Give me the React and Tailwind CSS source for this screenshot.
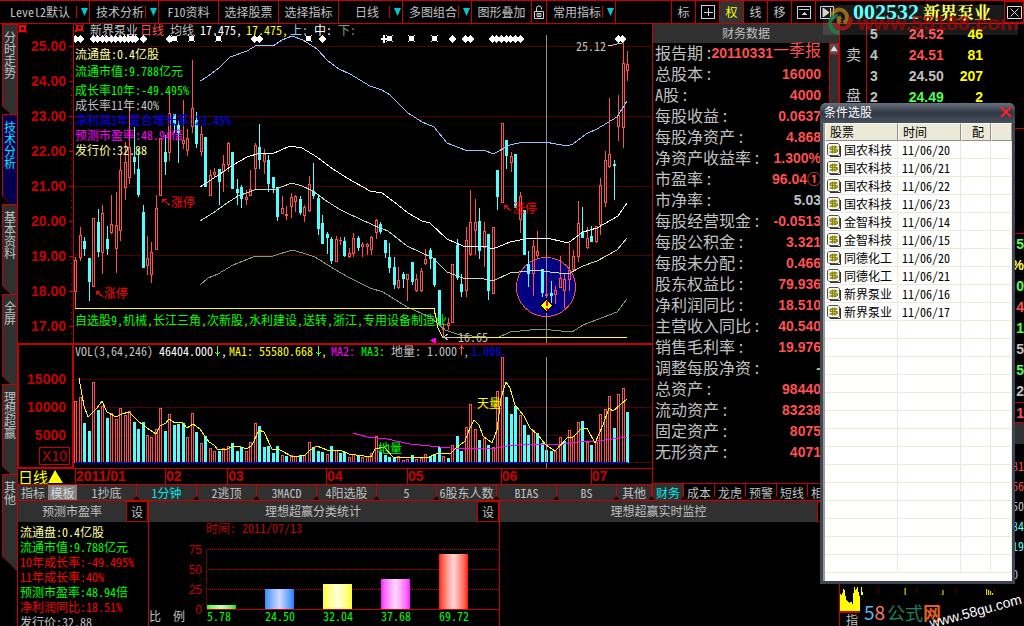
import React from "react";

const RED = "#ff5050";
const CYAN = "#50ffff";

/* high, body top, body bottom, low, r = rising / c = falling */
const CANDLES = `257 260 292 308 r|227 235 258 261 r|237 241 249 256 c|258 258 282 301 c|218 218 287 287 r|209 222 252 257 c|205 213 253 274 r|226 239 249 255 c|195 224 233 234 r|192 225 249 273 r|155 170 231 241 r|142 162 188 200 r|107 147 178 184 r|127 157 162 174 c|148 169 195 197 c|205 212 268 268 c|236 258 266 275 r|242 252 275 283 r|195 208 250 250 r|138 138 196 196 r|135 152 162 175 c|90 113 153 161 r|114 114 124 133 c|121 125 133 163 c|100 140 144 149 r|129 138 151 156 r|60 108 127 133 r|112 120 144 148 c|126 134 152 156 r|137 137 187 187 c|170 175 196 196 r|168 172 175 178 r|169 169 182 205 c|155 164 172 192 r|142 143 165 172 r|152 152 189 189 c|179 189 193 205 c|185 187 199 208 c|190 197 200 205 r|170 189 196 196 r|143 145 169 189 r|124 147 160 169 c|149 154 162 174 r|155 160 184 192 c|177 177 188 193 c|187 187 217 221 c|196 208 214 214 r|206 214 216 220 r|193 197 207 218 r|195 196 202 212 r|196 199 213 215 c|205 207 216 222 r|176 184 211 212 r|163 191 196 199 c|195 198 229 235 c|215 223 244 244 c|232 234 238 254 c|237 239 261 264 c|236 239 262 262 r|237 240 241 245 r|237 241 256 257 c|248 253 257 258 r|233 238 254 257 r|236 238 248 251 c|242 244 247 257 r|243 244 247 255 r|236 237 250 255 r|219 220 233 239 r|222 224 232 234 c|240 240 253 258 c|243 257 268 273 c|257 267 285 289 c|267 280 288 289 r|272 274 279 288 c|274 274 280 301 r|262 262 282 285 c|274 279 291 292 r|268 271 291 292 r|249 259 264 265 r|248 250 259 269 c|258 258 285 287 c|290 290 325 325 c|323 328 330 337 r|318 323 326 330 r|264 264 323 323 r|239 245 278 280 c|274 284 292 297 c|227 240 291 297 r|190 222 255 256 r|199 222 231 255 r|208 221 251 259 c|222 231 248 267 r|234 234 291 300 c|227 227 294 294 r|170 170 197 210 c|123 123 203 203 r|140 140 156 169 c|152 156 163 172 r|154 154 208 208 c|192 196 220 233 r|210 210 255 255 c|251 264 274 287 c|240 246 274 296 r|231 251 256 259 r|269 269 293 297 c|276 294 296 297 r|281 293 296 308 c|286 290 295 304 r|256 278 288 288 r|273 279 291 308 r|243 270 280 291 r|250 256 270 272 r|201 223 257 262 r|207 232 238 238 c|227 238 248 249 r|226 236 242 242 c|226 226 242 243 r|178 185 225 235 r|151 160 203 207 r|98 154 167 168 r|160 164 166 200 c|95 115 127 141 r|41 63 128 148 r|51 64 71 81 r`
  .split("|")
  .map((row) => {
    const [high, top, bottom, low, kind] = row.split(" ");
    return { high: +high, top: +top, bottom: +bottom, low: +low, up: kind === "r" };
  });

const VOLUMES =
  "401r 397r 423c 431c 382r 410c 406r 418c 413r 419r 408r 415r 411r 422c 429c 422c 435r 437r 429r 408r 431c 414r 425c 424c 423c 437r 413r 432c 443r 436c 448r 451r 451c 448r 446r 443c 451c 447c 451r 442r 423r 426c 447c 446c 453c 446c 455r 456c 455r 456r 455c 455r 442r 447c 451c 452c 454r 446c 450r 453c 452c 457r 454r 456c 457r 456r 453r 436r 452c 455c 457c 457c 456r 460r 459r 455c 459r 458r 454r 456c 454c 447c 456r 458c 445r 436c 451c 427r 404r 429r 440c 438r 445c 447r 391r 357r 397c 414c 406c 415r 425c 435c 430r 433c 443c 450c 451c 451r 437r 441c 430r 436r 422r 421c 442r 445c 442r 414r 409r 396r 428c 394r 388r 412c"
    .split(" ")
    .map((v) => ({ top: parseInt(v, 10), up: v.endsWith("r") }));

const barX = (i) => Math.round(75.2 + i * 4.488);

const BAND_TOP = "200,81 207,77 219,68 230,57 247,51 257,45 273,46 282,40 292,36 303,40 317,49 328,61 339,69 350,74 370,86 382,90 390,95 408,113 422,122 434,127 447,143 465,150 484,150 493,154 510,145 523,142 545,142 567,146 573,144 586,134 597,129 617,117 627,101";
const BAND_UPPER = "200,187 220,174 233,165 247,157 260,153 272,154 290,146 302,148 317,157 333,169 347,178 370,191 382,193 393,201 408,213 422,221 430,223 447,239 463,246 485,246 493,249 510,242 525,239 547,238 568,243 583,232 597,228 618,216 627,203";
const BAND_MID = "200,221 213,213 227,203 238,196 257,189 273,190 292,183 302,186 313,191 325,200 339,209 347,213 373,225 388,231 407,246 433,258 447,272 463,278 480,278 493,281 510,273 538,270 550,272 568,274 583,266 597,261 617,250 627,238";
const BAND_LOW = "200,285 208,278 218,274 233,265 253,257 273,256 292,250 303,253 315,257 339,272 350,278 370,288 383,292 407,307 430,317 445,330 460,335 497,338 510,332 540,329 572,332 583,325 617,312 627,299";
const VOL_MA = "79,378 84,406 88,417 97,408 102,401 107,412 116,417 122,414 129,412 138,421 147,428 156,434 160,426 166,423 169,419 175,423 182,422 187,428 193,424 200,429 209,442 214,445 218,450 227,449 233,446 241,447 247,449 252,445 259,430 264,432 272,449 280,450 293,457 305,455 310,450 317,446 327,450 340,450 349,454 371,457 375,449 384,447 393,457 408,458 429,457 438,453 450,454 456,448 465,441 470,428 474,420 479,425 483,436 492,443 497,430 501,398 506,382 510,388 515,405 524,416 530,428 537,434 546,445 555,451 568,437 573,437 582,428 587,428 595,443 603,425 609,408 613,411 627,399";
const VOL_SLOW = "353,433 367,437 387,439 410,444 450,448 492,449 507,446 530,444 557,445 577,442 597,441 627,437";

const DIAMONDS = [75, 80, 93, 97, 102, 106, 111, 115, 120, 124, 128, 132, 135, 143, 169, 254, 259, 322, 452, 465, 470, 492, 496, 501, 506, 510, 515, 520, 618, 622];
const STARS = [130, 174, 191, 218, 308, 389, 411, 434];

const Line = ({ pts, color }) => (
  <polyline points={pts} fill="none" stroke={color} strokeWidth="1" shapeRendering="crispEdges" />
);

function Drop() {
  return (
    <span className="flex h-3 w-3 items-center justify-center border-l border-[#c80000]">
      <svg width="7" height="8" viewBox="0 0 7 8" className="ml-1 shrink-0"><path d="M0 0h7L3.5 8z" fill="#00c8d0" /></svg>
    </span>
  );
}

function Tool({ children, drop, className = "" }) {
  return (
    <button className={"flex h-full shrink-0 items-center border-r border-[#c80000] whitespace-nowrap " + (drop ? "justify-between pl-1.5 pr-px " : "justify-center ") + className}>
      {children}
      {drop && <Drop />}
    </button>
  );
}

function Toolbar() {
  return (
    <header className="flex h-6 items-center border-y border-[#c80000]">
      <Tool drop className="w-[90px]"><span className="pl-1">Level2默认</span></Tool>
      <Tool drop className="w-[69px]">技术分析</Tool>
      <Tool className="w-[60px]">F10资料</Tool>
      <Tool className="w-[60px]">选择股票</Tool>
      <Tool className="w-[60px]">选择指标</Tool>
      <Tool drop className="w-[64px]"><span className="pl-2.5">日线</span></Tool>
      <Tool drop className="w-[69px]">多图组合</Tool>
      <Tool className="w-[60px]">图形叠加</Tool>
      <Tool className="w-[15px]">
        <svg width="12" height="14" viewBox="0 0 12 14" fill="none" stroke="#d0d0d0" aria-label="锁定">
          <path d="M1.500 6.500h9v7h-9zM3.500 6V3q0-2 2.500-2t2.500 2v1.500M4 8.500h4v3h-4zM6 9v3" />
        </svg>
      </Tool>
      <Tool drop className="w-[69px]">常用指标</Tool>
      <span className="h-full flex-1 border-r border-[#c80000]" />
      <Tool className="w-6">标</Tool>
      <Tool className="w-6">
        <svg width="14" height="14" viewBox="0 0 14 14" fill="none" stroke="#d0d0d0" shapeRendering="crispEdges" aria-label="加"><path d="M.5.5h13v13H.5zM7.500 3v8M3 7.500h9" /></svg>
      </Tool>
      <Tool className="w-6 bg-[#333] text-[#ffff00]">权</Tool>
      <Tool className="w-6">线</Tool>
      <Tool className="w-6">移</Tool>
      <Tool className="w-6">
        <svg width="14" height="13" viewBox="0 0 14 13" fill="none" stroke="#d0d0d0" shapeRendering="crispEdges" aria-label="收起"><path d="M.5.5h13v12H.5zM2 3.500h10M5 8.500h5M6 7.500h3M7 6.500h1" /></svg>
      </Tool>
      <button className="flex h-full w-[22px] shrink-0 items-center justify-center">
        <svg width="14" height="13" viewBox="0 0 14 13" fill="none" stroke="#d0d0d0" aria-label="右移"><path d="M.5.5h13v12H.5zM10.500 2v9" /><path d="M3 2l6 4.500L3 11z" fill="#d0d0d0" /></svg>
      </button>
      <div className="relative flex h-full w-[186px] shrink-0 items-center pl-[15px]">
        <div className="pointer-events-none absolute top-1 -left-[15px] z-10 flex h-[30px] w-[195px] bg-white/10">
          <svg width="28" height="30" viewBox="0 0 28 30" className="ml-1 shrink-0 opacity-80" fill="none" strokeWidth="4">
            <path d="M4 10q7-9 14-3q5 6-1 11" stroke="#b08020" />
            <path d="M23 12q2 8-5 11q-7 2-9-5" stroke="#b01818" />
            <path d="M12 28q-9-2-9-10q1-7 8-7" stroke="#208050" />
            <path d="M14 12q-4 2-1 6" stroke="#b08020" />
          </svg>
          <span className="pt-[7px] pl-0.5 font-['Liberation_Sans',sans-serif] text-[21px] leading-[22px] font-bold text-[#b00000]/70">www.55188.com</span>
        </div>
        <span className="font-['Liberation_Serif',serif] text-[22px] leading-5 font-bold text-[#50ffff]">002532</span>
        <span className="ml-1 font-['Noto_Serif_CJK_SC','Noto_Sans_CJK_SC',serif] text-[17px] leading-5 font-bold text-[#ffff50]">新界泵业</span>
        <button className="relative z-20 ml-auto flex h-full w-5 items-center justify-center border border-[#c80000] bg-black">
          <svg width="15" height="13" viewBox="0 0 15 13" className="shrink-0" fill="none" stroke="#e0e0e0" aria-label="关闭"><path d="M.5.5h14v12H.5zM3.500 2.500l8 8M11.500 2.500l-8 8" /></svg>
        </button>
      </div>
    </header>
  );
}

const SIDE = ["分时走势", "技术分析", "基本资料", "全屏", "理想超赢", "其他"];

function SideTabs() {
  return (
    <nav className="flex w-[18px] shrink-0 flex-col border-r border-[#c80000] pl-0.5">
      {SIDE.map((t, i) => {
        const last = i === 5;
        const clip = last
          ? "[clip-path:polygon(0_0,100%_0,100%_100%,0_calc(100%-15px))]"
          : "[clip-path:polygon(0_0,100%_0,100%_100%,55%_100%,0_calc(100%-8px))]";
        return (
          <button key={t} className={"w-full shrink-0 bg-[#c80000] pt-px pl-px " + (last ? "h-[97px] " : "h-[90px] ") + clip}>
            <span className={"flex h-full w-full flex-col items-center pt-1.5 leading-3 " + clip + (i === 1 ? " bg-[#000050] text-[#00e8ff]" : " bg-[#303030] text-[#c0c0c0]")}>
              {[...t].map((c) => <span key={c}>{c}</span>)}
            </span>
          </button>
        );
      })}
    </nav>
  );
}

function PriceChart() {
  return (
    <section className="flex h-[321px] border-b-2 border-[#c80000]">
      <div className="relative w-14 shrink-0 pt-1">
        {["25.00", "24.00", "23.00", "22.00", "21.00", "20.00", "19.00", "18.00", "17.00"].map((p) => (
          <div key={p} className="flex h-[35px] items-center justify-end pr-2 font-['Liberation_Sans',sans-serif] text-sm leading-4 font-bold text-[#c80000]">{p}</div>
        ))}
        <svg className="absolute top-0 right-0" width="5" height="319" viewBox="0 24 5 319" shapeRendering="crispEdges">
          {Array.from({ length: 42 }, (_, i) => <rect key={i} x={i % 5 ? 2 : 0} y={46 + i * 7} width={i % 5 ? 1 : 4} height="1" fill="#c80000" />)}
          <rect x="4" y="24" width="1" height="319" fill="#c80000" />
        </svg>
        <svg className="absolute top-0 left-0" width="9" height="9" viewBox="0 0 9 9"><path d="M0 0l2 1h5l2-1-1 3v3l1 3-3-1H3L0 9l1-3V3z" fill="#ff0000" /><rect x="3" y="3" width="3" height="3" fill="#000" /></svg>
      </div>
      <div className="relative min-w-0 flex-1">
        <svg className="block h-full w-full" viewBox="74 24 578 319" preserveAspectRatio="none" shapeRendering="crispEdges">
          {[46, 116, 186, 255, 325].map((y) => <rect key={y} x="74" y={y} width="578" height="1" fill="#500000" />)}
          <circle cx="546" cy="287" r="29.500" fill="#000080" stroke={RED} />
          <rect x="546" y="35" width="1" height="309" fill="#909090" />
          {CANDLES.map((c, i) => {
            const x = barX(i);
            const h = Math.max(1, c.bottom - c.top);
            const col = c.up ? RED : CYAN;
            return (
              <g key={i} fill={col}>
                <rect x={x} y={c.high} width="1" height={Math.max(0, c.top - c.high)} />
                <rect x={x} y={c.bottom} width="1" height={Math.max(0, c.low - c.bottom)} />
                {c.up && h > 1 ? <rect x={x - 0.5} y={c.top + 0.5} width="2" height={h - 1 || 1} fill="none" stroke={col} /> : <rect x={x - 1} y={c.top} width="3" height={h} />}
              </g>
            );
          })}
          <Line pts={BAND_TOP} color="#a0c0ff" />
          <Line pts={BAND_UPPER} color="#ffffff" />
          <Line pts={BAND_MID} color="#c0dcc0" />
          <Line pts={BAND_LOW} color="#809880" />
          <Line pts="75,308.500 434,308.500 438,328 443,337.500 627,337.500" color="#ffff00" />
          {DIAMONDS.map((x) => <path key={x} d={`M${x - 3} 39l3-4 4 4-4 4z`} fill="#fff" />)}
          {STARS.map((x) => <path key={x} d={`M${x - 3} 35l2 1h3l2-1-1 2v3l1 2-2-1h-3l-2 1 1-2v-3z`} fill="#fff" />)}
          <path d="M384 35v8M381 39h7" stroke="#fff" strokeWidth="2" />
          <path d="M540 305.500l6.500-6.500 6.500 6.500-6.500 6.500z" fill="#ffff00" stroke="#000" />
          <path d="M546.500 301v5M546.500 308v2" stroke="#ff0000" strokeWidth="2" />
          <path d="M169.500 205l-7-6m0 4v-4h4M103 297l-7-6m0 4v-4h4M511 211l-7-6m0 4v-4h4" fill="none" stroke="#ff0000" />
          <path d="M608 46l14-3M457 337h-13l4-3m-4 3l4 3" fill="none" stroke="#c0c0c0" />
          <path d="M430 340.500l6-3v6z" fill="#ff00ff" />
          <path d="M75 24l2 1h5l2-1-1 2v3l1 3-3-1h-3l-3 1 1-3v-3z" fill="#ff0000" />
          <rect x="78" y="26" width="3" height="3" fill="#000" />
        </svg>
        <div className="absolute top-0 left-4 flex h-3 items-center leading-3 whitespace-nowrap">
          <span className="text-[#c0c0c0]">新界泵业</span>
          <span className="ml-0.5 text-[#ff5050]">日线</span>
          <span className="ml-1.5 text-[#c0c0c0]">均线</span>
          <span className="ml-1.5 text-white">17.475,</span>
          <span className="ml-1 text-[#ffff00]">17.475,</span>
          <span className="ml-0.5 text-[#a0c0ff]">上:</span>
          <span className="ml-1.5 text-white">中:</span>
          <span className="ml-1.5 text-[#809880]">下:</span>
        </div>
        <div className="absolute top-[22px] left-px flex flex-col leading-[15px] whitespace-nowrap">
          <span className="mb-0.5 text-[#ffffa0]">流通盘:0.4亿股</span>
          <span className="mb-1 text-[#00ff00]">流通市值:9.788亿元</span>
          <span className="text-[#00ff00]">成长率10年:-49.495%</span>
          <span className="text-[#c0c0c0]">成长率11年:40%</span>
          <span className="text-[#0000ff]">净利润3年复合增长率:23.45%</span>
          <span className="text-[#ff00ff]">预测市盈率:48.94倍</span>
          <span className="text-[#ffffa0]">发行价:32.88</span>
        </div>
        <span className="absolute top-[170px] left-[97px] leading-4 text-[#ff0000]">涨停</span>
        <span className="absolute top-[261px] left-[30px] leading-4 text-[#ff0000]">涨停</span>
        <span className="absolute top-[176px] left-[439px] leading-4 text-[#ff0000]">涨停</span>
        <span className="absolute top-[14px] left-[502px] leading-4 text-[#c0c0c0]">25.12</span>
        <span className="absolute top-[305px] left-[384px] leading-4 text-[#c0c0c0]">16.65</span>
        <span className="absolute top-[288px] left-px leading-4 whitespace-nowrap text-[#00ff00]">自选股9,机械,长江三角,次新股,水利建设,送转,浙江,专用设备制造业</span>
      </div>
    </section>
  );
}

function VolumeChart() {
  return (
    <section className="flex h-[123px]">
      <div className="relative w-14 shrink-0 border-r-2 border-b border-l border-[#c80000] pt-5">
        {["15000", "10000", "5000"].map((p) => (
          <div key={p} className="flex h-7 items-center justify-end pr-1.5 font-['Liberation_Sans',sans-serif] text-sm leading-4 font-bold text-[#c80000]">{p}</div>
        ))}
        <div className="absolute right-0.5 bottom-0.5 border border-[#c80000] px-0.5 font-['Liberation_Sans',sans-serif] text-sm leading-4 text-[#c80000]">X10</div>
      </div>
      <div className="relative min-w-0 flex-1">
        <svg className="block h-full w-full" viewBox="74 345 578 123" preserveAspectRatio="none" shapeRendering="crispEdges">
          {[379, 407, 435, 462].map((y) => <rect key={y} x="74" y={y} width="578" height="1" fill="#500000" />)}
          {VOLUMES.map((v, i) => v.up
            ? <rect key={i} x={barX(i) - 0.5} y={v.top + 0.5} width="2" height={462 - v.top} fill="none" stroke={RED} />
            : <rect key={i} x={barX(i) - 1} y={v.top} width="3" height={463 - v.top} fill={CYAN} />)}
          <rect x="546" y="357" width="1" height="111" fill="#909090" />
          <rect x="75" y="462" width="553" height="1" fill="#0000ff" />
          <Line pts={VOL_SLOW} color="#ff00ff" />
          <Line pts={VOL_MA} color="#ffff00" />
          <path d="M217.500 346v9m-2-3l2 3 2-3M318.500 346v9m-2-3l2 3 2-3" stroke="#50ff50" fill="none" />
          <path d="M461.500 355v-9m-2 3l2-3 2 3" stroke={RED} fill="none" />
        </svg>
        <div className="absolute top-0 left-px flex h-3 items-center leading-3 whitespace-nowrap">
          <span className="text-[#c0c0c0]">VOL(3,64,246)</span>
          <span className="ml-1.5 text-white">46404.000</span>
          <span className="ml-2 text-white">,</span>
          <span className="ml-0.5 text-[#ffff00]">MA1: 55580.668</span>
          <span className="ml-2 text-[#ffff00]">,</span>
          <span className="ml-1 text-[#ff00ff]">MA2:</span>
          <span className="ml-1.5 text-[#00ff00]">MA3:</span>
          <span className="ml-1.5 text-[#c0c0c0]">地量: 1.000</span>
          <span className="ml-1.5 text-[#c0c0c0]">,</span>
          <span className="ml-0.5 text-[#0000ff]">1.000,</span>
        </div>
        <span className="absolute top-[50px] left-[403px] leading-4 text-[#ffff00]">天量</span>
        <span className="absolute top-[95px] left-[304px] leading-4 text-[#00ff00]">地量</span>
      </div>
    </section>
  );
}

const MONTHS = [["2011/01", 90], ["02", 62], ["03", 99], ["04", 81], ["05", 94], ["06", 90], ["07", 61]];

function DateAxis() {
  return (
    <div className="flex h-4 border-t border-[#c80000]">
      <button className="flex w-[57px] shrink-0 items-center text-[15px] leading-4 text-[#ffff00]">
        日线<svg width="15" height="13" viewBox="0 0 15 13"><path d="M0 13L7 0l8 13z" fill="#ffff00" /></svg>
      </button>
      {MONTHS.map(([m, w]) => (
        <span key={m} className="min-w-0 basis-0 border-l border-[#c80000] font-['Liberation_Sans',sans-serif] text-sm leading-[15px] font-bold text-[#c80000]" style={{ flexGrow: w }}>{m}</span>
      ))}
    </div>
  );
}

const TEMPLATES = ["1抄底", "1分钟", "2逃顶", "3MACD", "4阳选股", "5", "6股东人数", "BIAS", "BS", "其他"];

function TemplateTabs() {
  return (
    <div className="flex h-[17px] border-y border-[#c80000] bg-[#303030] leading-[14px]">
      <button className="w-[30px] shrink-0">指标</button>
      <button className="w-[29px] shrink-0 bg-[#808080] text-[#d8d8d8]">模板</button>
      {TEMPLATES.map((t, i) => (
        <button key={t} className={"relative border-r border-[#c80000] whitespace-nowrap " + (i === 9 ? "w-[35px] shrink-0 " : "min-w-0 flex-1 ") + (i === 1 ? "text-[#00e8e8]" : "")}>
          {t}
          <svg className="absolute right-[-4px] bottom-0 z-10" width="7" height="4" viewBox="0 0 7 4"><path d="M0 4l3.500-4L7 4z" fill="#000" stroke="#c80000" strokeWidth=".5" /></svg>
        </button>
      ))}
    </div>
  );
}

const FINANCE = [
  ["报告期", "20110331一季报"], ["总股本", "16000"], ["A股", "4000"], ["每股收益", "0.0637"], ["每股净资产", "4.868"],
  ["净资产收益率", "1.300%"], ["市盈率", "96.04①"], ["市净率", "5.03"], ["每股经营现金", "-0.0513"], ["每股公积金", "3.321"],
  ["每股未分配", "0.466"], ["股东权益比", "79.936"], ["净利润同比", "18.510"], ["主营收入同比", "40.540"], ["销售毛利率", "19.976"],
  ["调整每股净资", "-"], ["总资产", "98440"], ["流动资产", "83238"], ["固定资产", "8075"], ["无形资产", "4071"],
];

function Finance() {
  return (
    <aside className="flex w-[187px] shrink-0 flex-col border-l border-[#c80000]">
      <h2 className="h-[19px] bg-[#303030] text-center leading-[18px]">财务数据</h2>
      <div className="flex flex-1">
        <table className="h-[420px] w-[168px] table-fixed border-collapse whitespace-nowrap">
          <colgroup><col className="w-[54px]" /><col /></colgroup>
          <tbody>
            {FINANCE.map(([k, v], i) => (
              <tr key={k} className="h-[21px]">
                <th scope="row" className="p-0 pl-0.5 text-left align-top text-base leading-[18px] font-normal text-[#c0c0c0]">{k}<span className="pl-0.5">:</span></th>
                <td className={"p-0 text-right align-top font-['Liberation_Sans','Noto_Sans_CJK_SC',sans-serif] text-sm leading-5 font-bold " + (k === "市净率" || v === "-" ? "text-[#c0c0c0]" : "text-[#ff5050]")}>
                  {i === 0 ? <span className="flex items-center justify-end leading-5">20110331<span className="-mt-1 text-base leading-[18px] font-normal">一季报</span></span> : v}
                </td>
              </tr>
            ))}
          </tbody>
        </table>
        <div className="ml-auto w-2.5 border border-[#c80000] bg-[#303030]">
          <svg width="8" height="11" viewBox="0 0 8 11" className="border-b border-[#c80000] bg-[#505050]"><path d="M0 8l4-6 4 6z" fill="#e0e0e0" /></svg>
        </div>
      </div>
      <div className="flex h-[18px] border-y border-[#c80000] leading-[15px]">
        {["财务", "成本", "龙虎", "预警", "短线", "相关"].map((t, i) => (
          <button key={t} className={"relative flex-1 border-r border-[#c80000] whitespace-nowrap " + (i === 0 ? "bg-[#303030] text-[#00e8e8]" : "")}>
            {t}
            <svg className="absolute right-[-4px] bottom-0 z-10" width="7" height="4" viewBox="0 0 7 4"><path d="M0 4l3.500-4L7 4z" fill="#000" stroke="#c80000" strokeWidth=".5" /></svg>
          </button>
        ))}
      </div>
    </aside>
  );
}

function PanelHead({ title, blank }) {
  return (
    <div className="flex h-[21px] shrink-0 bg-[#303030] leading-[19px]">
      <h2 className="flex-1 text-center">{title}</h2>
      <button aria-label="设置" className="w-[22px] border border-[#c80000] bg-black leading-[17px]">{blank ? "" : "设"}</button>
    </div>
  );
}

const BARS = [
  ["5.78", 4, "from-[#00ff00] via-[#c0ffc0] to-[#00e000]"],
  ["24.50", 20, "from-[#3090ff] via-[#d0d8ff] to-[#1080ff]"],
  ["32.04", 25, "from-[#ffff00] via-[#ffffd8] to-[#ffff00]"],
  ["37.68", 30, "from-[#ff00ff] via-[#ffd8ff] to-[#ff00ff]"],
  ["69.72", 55, "from-[#ff0000] via-[#ffd8d8] to-[#ff0000]"],
];

function BottomPanels() {
  return (
    <div className="flex h-[125px] flex-1">
      <section className="flex w-[131px] shrink-0 flex-col overflow-hidden border-r border-[#c80000]">
        <PanelHead title="预测市盈率" />
        <div className="flex flex-col pt-0.5 pl-0.5 leading-[15px] whitespace-nowrap">
          <span className="text-[#ffffa0]">流通盘:0.4亿股</span>
          <span className="text-[#00ff00]">流通市值:9.788亿元</span>
          <span className="text-[#ff0000]">10年成长率:-49.495%</span>
          <span className="text-[#ff0000]">11年成长率:40%</span>
          <span className="text-[#00ff00]">预测市盈率:48.94倍</span>
          <span className="text-[#ff0000]">净利润同比:18.51%</span>
          <span>发行价:32.88</span>
        </div>
      </section>
      <section className="flex w-[351px] shrink-0 flex-col border-r border-[#c80000]">
        <PanelHead title="理想超赢分类统计" />
        <div className="h-3 pl-[57px] leading-3 text-[#c80000]">时间: 2011/07/13</div>
        <div className="mt-1.5 flex">
          <div className="flex w-[57px] shrink-0 flex-col items-end pr-1 font-['Liberation_Sans',sans-serif] text-xs leading-5 text-[#c80000]">
            <span>75</span><span>50</span><span>25</span><span>0</span>
          </div>
          <div className="relative mt-[9px] flex h-[61px] flex-1 items-end gap-[29px] border-b border-[#c80000] pl-px">
            <svg className="absolute inset-0 h-full w-full" fill="none" stroke="#c80000" strokeDasharray="1 1" shapeRendering="crispEdges">
              <path d="M0.500 0V60M0 .5H800M0 20.500H800M0 40.500H800" />
            </svg>
            {BARS.map(([v, h, g]) => <div key={v} className={"relative w-[29px] bg-linear-to-r " + g} style={{ height: h }} />)}
          </div>
        </div>
        <div className="-mt-3 flex leading-4">
          <span className="w-[58px] shrink-0">比&nbsp; 例</span>
          <div className="flex flex-1 gap-[29px] text-[#00ff00]">
            {BARS.map(([v]) => <span key={v} className="w-[29px] whitespace-nowrap">{v}</span>)}
          </div>
        </div>
      </section>
      <section className="flex min-w-0 flex-1 flex-col">
        <PanelHead title="理想超赢实时监控" blank />
      </section>
    </div>
  );
}

const ASKS = [["5", "24.52", "46", "text-[#ff5050]"], ["4", "24.51", "81", "text-[#ff5050]"], ["3", "24.50", "207", "text-[#c0c0c0]"], ["2", "24.49", "2", "text-[#50ff50]"]];
const QUOTE_BITS = [["5", "text-[#50ff50]"], ["%", "text-[#ffff50]"], ["0", "text-[#50ff50]"], ["4", "text-[#ff5050]"], ["1", "text-[#50ff50]"], ["5", "text-[#c0c0c0]"], ["5", "text-[#50ff50]"], ["2", "text-[#c0c0c0]"]];
const TICKS = [["81", "text-[#ff5050]"], ["66", "text-[#ff5050]"], ["50", "text-[#c0c0c0]"], ["84", "text-[#50ffff]"], ["19", "text-[#50ffff]"]];

function Quotes() {
  return (
    <aside className="flex w-[185px] shrink-0 flex-col border-l border-[#c80000] font-['Liberation_Sans','Noto_Sans_CJK_SC',sans-serif] font-bold">
      <div className="flex h-[105px] border-b border-[#c80000]">
        <div className="flex w-[27px] flex-col gap-5 border-r border-[#c80000] pt-5 pl-1.5 text-[15px] leading-[21px] font-normal text-[#c0c0c0]"><span>卖</span><span>盘</span></div>
        <table className="h-[84px] w-[116px] text-sm leading-[21px]">
          <tbody>
            {ASKS.map(([n, p, q, c]) => (
              <tr key={n}><td className="pl-[3px]">{n}</td><td className={"text-right " + c}>{p}</td><td className="text-right text-[#ffff00]">{q}</td></tr>
            ))}
          </tbody>
        </table>
      </div>
      <div className="mt-[104px] border-t border-b border-[#c80000] text-right text-sm leading-[21px]">
        {QUOTE_BITS.map(([t, c], i) => <div key={i} className={c}>{t}</div>)}
      </div>
      <div className="h-[20px] border-b border-[#c80000] text-right text-sm leading-[20px] text-[#ff5050]">1</div>
      <div className="h-[21px] bg-[#303030]" />
      <div className="pt-3 text-right font-['Noto_Sans_Mono_CJK_SC','Noto_Sans_CJK_SC',sans-serif] text-xs leading-5 font-normal">
        {TICKS.map(([t, c], i) => <div key={i} className={c}>{t}</div>)}
        <div className="pt-2 pr-1.5">0</div>
      </div>
      <div className="relative mt-auto flex h-[42px] flex-col">
        <svg className="h-[24px] w-full" viewBox="839 584 185 24" preserveAspectRatio="none" shapeRendering="crispEdges">
          <path d="M839 608V590l2 2 2-8 2 12 4 5 1-3 2 4 1-20 2 6 2-6 1 11h2V584h1v5h1v19z" fill="#ffff00" />
          <path d="M877.500 584v9M916.500 584v9M955.500 584v9M994.500 584v9" stroke="#a00000" strokeDasharray="1 1" />
          <path d="M904.500 585v7M940 592h1m1.500-5v5M986.500 586v6M988.500 587v5M990.500 588v5M992.500 590v3" stroke="#ffff00" />
        </svg>
        <div className="border-t-2 border-[#c80000] pl-1.5 text-xs leading-4 font-normal">指</div>
        <div className="absolute -right-px bottom-0 flex h-[34px] w-[165px] items-center bg-black">
          <span className="ml-1 flex font-['Noto_Sans_CJK_SC',sans-serif] text-[19px] leading-6 font-normal">
            <span className="text-[#50b8f0]">5</span><span className="text-[#ff8060]">8</span>
            <span className="ml-0.5 text-[18px] text-[#208060]">公式</span><span className="text-[18px] font-bold text-[#e06020]">网</span>
          </span>
          <span className="absolute top-2 right-0.5 origin-center -rotate-[15deg] text-[14px] leading-4 font-normal text-white">www.58gu.com</span>
        </div>
      </div>
    </aside>
  );
}

const PICKS = [
  ["国农科技", "11/06/20"], ["国农科技", "11/06/21"], ["国农科技", "11/06/22"], ["国农科技", "11/06/23"], ["金智科技", "11/06/14"],
  ["金智科技", "11/06/15"], ["同德化工", "11/06/20"], ["同德化工", "11/06/21"], ["新界泵业", "11/06/16"], ["新界泵业", "11/06/17"],
];
const CELL = "border-r border-b border-[#ece9d8] p-0 ";
const HEAD = "border border-t-[#f8f8f0] border-r-[#909088] border-b-[#909088] border-l-[#f8f8f0] bg-[#ece9d8] p-0 font-normal ";

function Coin() {
  return (
    <svg width="14" height="14" viewBox="0 0 14 14" className="ml-0.5 inline-block align-[-2px]">
      <path d="M2 .5h9l1.500 1.500v9l-1.500 1.500H2L.5 11V2z" fill="#fff" stroke="#505050" />
      <path d="M13.500 3v10.500H3" fill="none" stroke="#303030" />
      <path d="M10.500 4H4.500Q3 4 3 5.250T4.500 6.500H9Q10.500 6.500 10.500 7.750T9 9H2.500M5.500 2.500v8M8 2.500v8" fill="none" stroke="#8a8600" strokeWidth="1.400" />
    </svg>
  );
}

function PickDialog() {
  return (
    <div role="dialog" aria-label="条件选股" className="absolute top-[103px] right-[9px] z-30 flex w-[195px] flex-col rounded-t-md border-x-3 border-b-3 border-[#3d4652] bg-white">
      <div className="-mx-[3px] flex h-[20px] items-center justify-between rounded-t-md bg-linear-to-b from-[#68717f] via-[#303844] to-[#48515e] pb-0.5 pl-1 text-white">
        <span>条件选股</span>
        <button className="mr-[3px]">
          <svg width="12" height="12" viewBox="0 0 12 12" aria-label="关闭"><path d="M1 1l10 10M11 1L1 11" stroke="#ff2020" strokeWidth="2" /></svg>
        </button>
      </div>
      <table className="w-full table-fixed border-separate border-spacing-0 border-l-2 border-[#9a9a92] bg-white leading-[17px] text-black">
        <colgroup><col className="w-[73px]" /><col className="w-[63px]" /><col className="w-[30px]" /><col /></colgroup>
        <thead>
          <tr className="h-[18px]">
            <th className={HEAD + "pl-1 text-left leading-4"}>股票</th><th className={HEAD + "pl-1 text-left leading-4"}>时间</th><th className={HEAD + "pr-1.5 text-right leading-4"}>配</th><th className={HEAD} />
          </tr>
        </thead>
        <tbody>
          {Array.from({ length: 24 }, (_, i) => (
            <tr key={i} className="h-[18px]">
              <td className={CELL + "whitespace-nowrap"}>{PICKS[i] && <><Coin /><span className="ml-[3px]">{PICKS[i][0]}</span></>}</td>
              <td className={CELL + "pl-1"}>{PICKS[i] && PICKS[i][1]}</td>
              <td className={CELL} /><td className={CELL} />
            </tr>
          ))}
        </tbody>
      </table>
      <div className="h-2 border-l-2 border-[#9a9a92]" />
    </div>
  );
}

export default function App() {
  return (
    <div className="relative flex min-h-screen w-full flex-col overflow-hidden bg-black font-['Noto_Sans_Mono_CJK_SC','Noto_Sans_CJK_SC',sans-serif] text-xs text-[#c0c0c0]">
      <Toolbar />
      <main className="flex flex-1">
        <SideTabs />
        <div className="flex min-w-0 flex-1 flex-col">
          <div className="flex">
            <div className="flex min-w-0 flex-1 flex-col">
              <PriceChart />
              <VolumeChart />
              <DateAxis />
              <TemplateTabs />
            </div>
            <Finance />
          </div>
          <BottomPanels />
        </div>
        <Quotes />
      </main>
      <PickDialog />
    </div>
  );
}
